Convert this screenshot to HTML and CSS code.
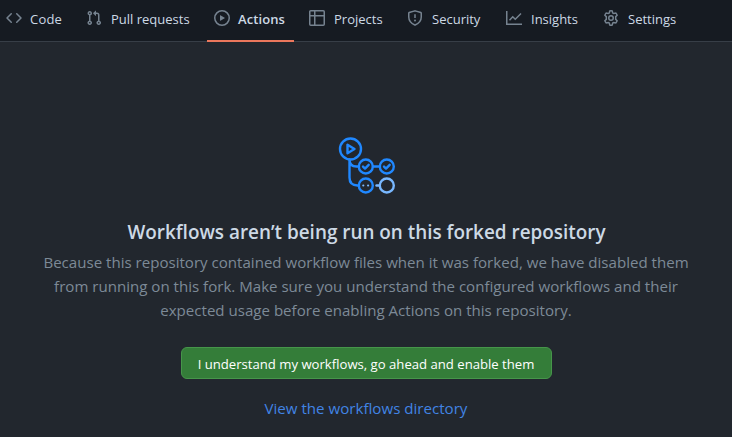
FILE: index.html
```html
<!DOCTYPE html>
<html lang="en">
<head>
<meta charset="utf-8">
<title>Actions</title>
<link rel="stylesheet" href="styles.css">
</head>
<body>
<nav class="tabs">
  <a class="tab tab-code"><svg class="icon" viewBox="0 0 16 16"><path d="M4.72 3.22a.75.75 0 0 1 1.06 1.06L2.06 8l3.72 3.72a.75.75 0 1 1-1.06 1.06L.47 8.53a.75.75 0 0 1 0-1.06l4.25-4.25zm6.56 0a.75.75 0 1 0-1.06 1.06L13.94 8l-3.72 3.72a.75.75 0 1 0 1.06 1.06l4.25-4.25a.75.75 0 0 0 0-1.06l-4.25-4.25z"/></svg><span>Code</span></a>
  <a class="tab tab-pulls"><svg class="icon" viewBox="0 0 16 16"><path fill-rule="evenodd" d="M7.177 3.073L9.573.677A.25.25 0 0 1 10 .854v4.792a.25.25 0 0 1-.427.177L7.177 3.427a.25.25 0 0 1 0-.354zM3.75 2.5a.75.75 0 1 0 0 1.5.75.75 0 0 0 0-1.5zm-2.25.75a2.25 2.25 0 1 1 3 2.122v5.256a2.251 2.251 0 1 1-1.5 0V5.372A2.25 2.25 0 0 1 1.5 3.25zM11 2.5h-1V4h1a1 1 0 0 1 1 1v5.628a2.251 2.251 0 1 0 1.5 0V5A2.5 2.5 0 0 0 11 2.5zm1 10.25a.75.75 0 1 1 1.5 0 .75.75 0 0 1-1.5 0zM3.75 12a.75.75 0 1 0 0 1.5.75.75 0 0 0 0-1.5z"/></svg><span>Pull requests</span></a>
  <a class="tab tab-actions selected"><svg class="icon" viewBox="0 0 16 16"><path fill-rule="evenodd" d="M1.5 8a6.5 6.5 0 1 1 13 0 6.5 6.5 0 0 1-13 0zM8 0a8 8 0 1 0 0 16A8 8 0 0 0 8 0zM6.379 5.227A.25.25 0 0 0 6 5.442v5.117a.25.25 0 0 0 .379.214l4.264-2.559a.25.25 0 0 0 0-.428L6.379 5.227z"/></svg><span>Actions</span></a>
  <a class="tab tab-projects"><svg class="icon" viewBox="0 0 16 16"><path class="line" d="M1.75.75h12.5a1 1 0 0 1 1 1v12.5a1 1 0 0 1-1 1H1.75a1 1 0 0 1-1-1V1.75a1 1 0 0 1 1-1zM5.75.75v14.5M.75 5.75h14.5"/></svg><span>Projects</span></a>
  <a class="tab tab-security"><svg class="icon" viewBox="0 0 16 16"><path class="line" d="M7.82.9a.6.6 0 0 1 .36 0l5.65 1.68a.6.6 0 0 1 .42.57V7c0 3.5-2.3 6.3-6.05 7.95a.5.5 0 0 1-.4 0C4.05 13.3 1.75 10.5 1.75 7V3.15a.6.6 0 0 1 .42-.57zM8 4.25v3.75"/><circle cx="8" cy="10.5" r="1"/></svg><span>Security</span></a>
  <a class="tab tab-insights"><svg class="icon" viewBox="0 0 16 16"><path class="line" d="M.75 1v13.25H16M3.5 10.25l3.25-3.5L9.25 9.25 15 3.5"/></svg><span>Insights</span></a>
  <a class="tab tab-settings"><svg class="icon" viewBox="0 0 16 16"><path class="line" d="M6.75 1 Q8 .6 9.25 1 L9.7 2.9 L10.8 3.55 L12.8 3 Q13.7 3.9 14.1 5.2 L12.7 6.65 V9.35 L14.1 10.8 Q13.7 12.1 12.8 13 L10.8 12.45 L9.7 13.1 L9.25 15 Q8 15.4 6.75 15 L6.3 13.1 L5.2 12.45 L3.2 13 Q2.3 12.1 1.9 10.8 L3.3 9.35 V6.65 L1.9 5.2 Q2.3 3.9 3.2 3 L5.2 3.55 L6.3 2.9Z"/><circle class="line" cx="8" cy="8" r="2.25"/></svg><span>Settings</span></a>
</nav>
<main class="notice">
  <svg class="art" viewBox="0 0 60 60">
    <g class="art-line">
      <circle cx="12.5" cy="12" r="10.5"/>
      <path d="M9.5 7.7v8.6l7-4.3zM11.5 22.5v18q0 8 8 8h1.5M11.5 22.5q0 7 7 7H21M35 29.5h7"/>
      <circle cx="27.8" cy="29.5" r="7"/>
      <circle cx="48.8" cy="29.5" r="7"/>
      <circle cx="27.8" cy="48.5" r="7"/>
      <path d="M25 29.6l2 2 3.7-3.8M46 29.6l2 2 3.7-3.8"/>
    </g>
    <g class="art-pale"><circle cx="48.8" cy="48.5" r="7"/><path d="M38.5 48.5h3"/></g>
    <g class="art-dots"><circle cx="25.3" cy="48.5" r="1.1"/><circle cx="30.1" cy="48.5" r="1.1"/></g>
  </svg>
  <h1 class="title">Workflows aren’t being run on this forked repository</h1>
  <p class="body">Because this repository contained workflow files when it was forked, we have disabled them<br>from running on this fork. Make sure you understand the configured workflows and their<br>expected usage before enabling Actions on this repository.</p>
  <button class="enable">I understand my workflows, go ahead and enable them</button>
  <a class="link">View the workflows directory</a>
</main>
</body>
</html>
```
FILE: styles.css
```css
* { box-sizing: border-box; }
body {
  margin: 0;
  height: 437px;
  overflow: hidden;
  background: #22272e;
  color: #cdd9e5;
  font-family: "Open Sans", "Noto Sans", sans-serif;
}
.tabs {
  display: flex;
  height: 42px;
  background: #161b22;
  border-bottom: 1px solid #373e47;
}
.tab {
  display: flex;
  flex: none;
  gap: 9px;
  height: 42px;
  padding: 10px 0 0 7px;
  font-size: 13px;
  line-height: 18px;
  white-space: nowrap;
}
.tab-code { width: 79px; padding-left: 6px; gap: 8px; letter-spacing: 0.2px; }
.tab-pulls { width: 128px; }
.tab-actions { width: 87px; gap: 8px; letter-spacing: 0.1px; }
.tab-projects { width: 106px; padding-left: 15px; }
.tab-security { width: 99px; }
.tab-insights { width: 97px; }
.tab-settings { width: 90px; }
.selected { font-weight: 600; border-bottom: 2px solid #ec775c; }
.icon { flex: none; width: 16px; height: 16px; fill: #768390; }
.line { fill: none; stroke: #768390; stroke-width: 1.5; }
.notice {
  display: flex;
  flex-direction: column;
  align-items: center;
  padding-top: 95px;
  white-space: nowrap;
}
.art { width: 60px; height: 60px; margin-left: 4px; }
.art-line, .art-pale { fill: none; stroke: #2088ff; stroke-width: 2.4; stroke-linejoin: round; stroke-linecap: round; }
.art-pale { stroke: #79b8ff; }
.art-dots { fill: #79b8ff; }
.title { margin: 20px 0 0; padding-left: 1px; font-size: 18.9px; font-weight: 600; line-height: 30px; }
.body { margin: 3px 0 0; color: #7d8a97; font-size: 15.09px; line-height: 24px; text-align: center; }
.enable {
  width: 371px;
  height: 32px;
  margin: 25px 0 0;
  padding: 1px 0 0;
  border: 1px solid #46954a;
  border-radius: 6px;
  background: #347d39;
  color: #fff;
  font: 13.14px/20px "Open Sans", "Noto Sans", sans-serif;
}
.link { margin-top: 17px; color: #4184e4; font-size: 15.12px; line-height: 24px; }
```
